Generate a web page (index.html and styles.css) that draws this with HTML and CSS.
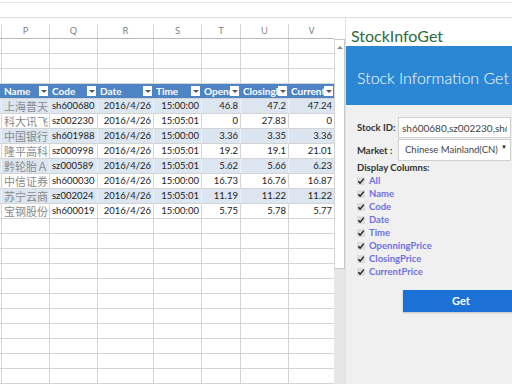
FILE: index.html
```html
<!DOCTYPE html>
<html lang="zh-CN">
<head>
  <meta charset="UTF-8">
  <title>StockInfoGet</title>
  <link rel="stylesheet" href="styles.css">
</head>
<body>
  <div class="topbar"><div class="formula"></div></div>

  <div class="main">
    <div class="sheet" id="sheet"></div>

    <div class="gutter">
      <div class="gutter-top"></div>
      <div class="vscroll"><span class="up"></span></div>
    </div>

    <div class="pane">
      <div class="pane-title">StockInfoGet</div>
      <div class="banner">Stock Information Get</div>
      <div class="pane-body">
        <div class="field">
          <label for="stockId">Stock ID:</label>
          <input type="text" id="stockId" value="sh600680,sz002230,sh601988,sz000998,sz000589,sh600030,sz002024,sh600019">
        </div>
        <div class="field">
          <label>Market :</label>
          <div class="select"><span class="select-text">Chinese Mainland(CN)</span><span class="caret">&#9660;</span></div>
        </div>
        <div class="cols-title">Display Columns:</div>
        <ul class="checks" id="checks"></ul>
        <div class="actions"><button class="get">Get</button></div>
      </div>
    </div>
  </div>

  <script>
    const letters = ['P', 'Q', 'R', 'S', 'T', 'U', 'V'];
    const heads = ['Name', 'Code', 'Date', 'Time', 'OpenningPrice', 'ClosingPrice', 'CurrentPrice'];
    const stocks = [
      ['上海普天', 'sh600680', '2016/4/26', '15:00:00', '46.8', '47.2', '47.24'],
      ['科大讯飞', 'sz002230', '2016/4/26', '15:05:01', '0', '27.83', '0'],
      ['中国银行', 'sh601988', '2016/4/26', '15:00:00', '3.36', '3.35', '3.36'],
      ['隆平高科', 'sz000998', '2016/4/26', '15:05:01', '19.2', '19.1', '21.01'],
      ['黔轮胎Ａ', 'sz000589', '2016/4/26', '15:05:01', '5.62', '5.66', '6.23'],
      ['中信证券', 'sh600030', '2016/4/26', '15:00:00', '16.73', '16.76', '16.87'],
      ['苏宁云商', 'sz002024', '2016/4/26', '15:05:01', '11.19', '11.22', '11.22'],
      ['宝钢股份', 'sh600019', '2016/4/26', '15:00:00', '5.75', '5.78', '5.77']
    ];
    const sheet = document.getElementById('sheet');

    function addRow(cls, cells) {
      const row = document.createElement('div');
      row.className = 'row ' + cls;
      cells.forEach(c => row.appendChild(c));
      sheet.appendChild(row);
    }

    function cell(text, cls) {
      const d = document.createElement('div');
      d.className = 'cell ' + (cls || '');
      d.textContent = text || '';
      return d;
    }

    function emptyRow() {
      addRow('', letters.map(() => cell('')));
    }

    addRow('colhead', letters.map(l => cell(l)));
    for (let i = 0; i < 3; i++) emptyRow();

    addRow('thead', heads.map(h => {
      const d = cell('', 'th');
      const label = document.createElement('span');
      label.className = 'th-label';
      label.textContent = h;
      const btn = document.createElement('span');
      btn.className = 'filter';
      d.appendChild(label);
      d.appendChild(btn);
      return d;
    }));

    stocks.forEach((s, i) => {
      addRow(i % 2 === 0 ? 'band' : 'plain', s.map((v, j) => {
        if (j === 0) return cell(v, 'cn');
        if (j === 1) return cell(v, 'txt');
        return cell(v, 'num');
      }));
    });
    for (let i = 0; i < 11; i++) emptyRow();

    // liste des colonnes cochées
    const checks = document.getElementById('checks');
    ['All'].concat(heads).forEach(h => {
      const li = document.createElement('li');
      li.innerHTML = '<span class="box"><svg width="8" height="8" viewBox="0 0 8 8"><path d="M1.3 4.2 L3.1 6.1 L6.8 1.6" fill="none" stroke="#222" stroke-width="1.4"/></svg></span>' + h;
      checks.appendChild(li);
    });
  </script>
</body>
</html>
```

FILE: styles.css
```css
body {
  margin: 0;
  width: 512px;
  height: 384px;
  overflow: hidden;
  background: #fff;
  font-family: Lato, "Open Sans", sans-serif;
  color: #333;
}
.topbar {
  height: 18px;
  padding-top: 2px;
  box-sizing: border-box;
}
.formula {
  height: 14px;
  border-top: 1px solid #e6e6e6;
  border-bottom: 1px solid #dcdcdc;
}
.main {
  display: flex;
  height: 366px;
}

/* feuille */
.sheet {
  width: 334px;
  flex: none;
  padding-top: 6px;
  overflow: hidden;
  font-size: 9.5px;
}
.row {
  display: grid;
  grid-template-columns: 48px 48px 56px 48px 39px 48px 46px;
  height: 15px;
  padding-left: 1px;
  border-bottom: 1px solid #d4d4d4;
  box-sizing: border-box;
}
.cell {
  border-left: 1px solid #d4d4d4;
  overflow: hidden;
  white-space: nowrap;
  line-height: 14px;
  padding: 0 2px;
}
.colhead {
  height: 15px;
  border-bottom-color: #b9b9b9;
}
.colhead .cell {
  text-align: center;
  color: #777;
  font-family: "Open Sans", sans-serif;
  font-size: 9.5px;
}
.thead {
  background: #4f84c4;
}
.thead .cell {
  border-left-color: transparent;
}
.th {
  display: flex;
  align-items: center;
  padding: 0 1px 0 2px;
  color: #fff;
  font-weight: bold;
  font-size: 10px;
}
.th-label {
  flex: 1;
  overflow: hidden;
}
.filter {
  flex: none;
  width: 9px;
  height: 10px;
  background: #fff;
  display: flex;
  align-items: center;
  justify-content: center;
}
.filter::after {
  content: "";
  border-top: 3px solid #555;
  border-left: 3px solid transparent;
  border-right: 3px solid transparent;
}
.band {
  background: #dce6f1;
}
.band .cell {
  border-left-color: #eef3f9;
}
.cn {
  font-family: "Noto Sans CJK SC", sans-serif;
  font-size: 11px;
  color: #8a8a8a;
  padding-left: 2px;
}
.txt {
  color: #222;
}
.num {
  text-align: right;
  color: #222;
}

/* barre de défilement */
.gutter {
  width: 11px;
  flex: none;
  background: #e6e6e6;
}
.gutter-top {
  height: 21px;
  background: #fff;
}
.vscroll {
  height: 230px;
  border: 1px solid #c8c8c8;
  border-left-color: #d4d4d4;
  background: #fff;
  box-sizing: border-box;
  display: flex;
  justify-content: center;
  padding-top: 6px;
}
.up {
  width: 0;
  height: 0;
  border-bottom: 3px solid #888;
  border-left: 3px solid transparent;
  border-right: 3px solid transparent;
}

/* volet */
.pane {
  flex: 1;
  display: flex;
  flex-direction: column;
  overflow: hidden;
  border-left: 1px solid #e0e0e0;
}
.pane-title {
  height: 28px;
  padding: 8px 0 0 5px;
  box-sizing: border-box;
  font-size: 16px;
  line-height: 20px;
  color: #2e6b3c;
}
.banner {
  height: 59px;
  padding: 22px 0 0 11px;
  box-sizing: border-box;
  background: #2b87d3;
  color: #fff;
  font-size: 16px;
  font-weight: 300;
  line-height: 20px;
  white-space: nowrap;
}
.pane-body {
  flex: 1;
  background: #f0f0f0;
  padding: 12px 0 0 11px;
}
.field {
  display: flex;
  align-items: center;
  margin-bottom: 1px;
}
.field label {
  width: 41px;
  flex: none;
  font-weight: bold;
  font-size: 9.5px;
  color: #333;
}
.field input {
  width: 113px;
  height: 21px;
  box-sizing: border-box;
  border: 1px solid #d0d0d0;
  padding: 0 3px;
  font-family: Lato, sans-serif;
  font-size: 10px;
  color: #444;
}
.select {
  width: 113px;
  height: 22px;
  box-sizing: border-box;
  border: 1px solid #d0d0d0;
  background: #fff;
  padding: 0 3px 0 6px;
  display: flex;
  font-size: 9.5px;
  color: #444;
  white-space: nowrap;
}
.select-text {
  flex: 1;
  line-height: 20px;
  overflow: hidden;
}
.caret {
  flex: none;
  margin-top: 3px;
  font-size: 6px;
  line-height: 8px;
  color: #222;
}
.cols-title {
  margin-top: 1px;
  font-weight: bold;
  font-size: 9.5px;
  line-height: 12px;
}
.checks {
  list-style: none;
  margin: 0;
  padding: 0;
}
.checks li {
  display: flex;
  align-items: center;
  height: 13px;
  font-weight: bold;
  font-size: 9.5px;
  color: #6f70de;
}
.box {
  width: 8px;
  height: 8px;
  background: #dcdcdc;
  margin-right: 4px;
  display: flex;
}
.actions {
  margin-top: 11px;
  padding-left: 46px;
}
.get {
  width: 116px;
  height: 22px;
  border: none;
  background: #1c71d6;
  color: #fff;
  font-family: Lato, sans-serif;
  font-weight: bold;
  font-size: 11px;
  box-shadow: 0 1px 2px rgba(0, 0, 0, 0.2);
}
```
